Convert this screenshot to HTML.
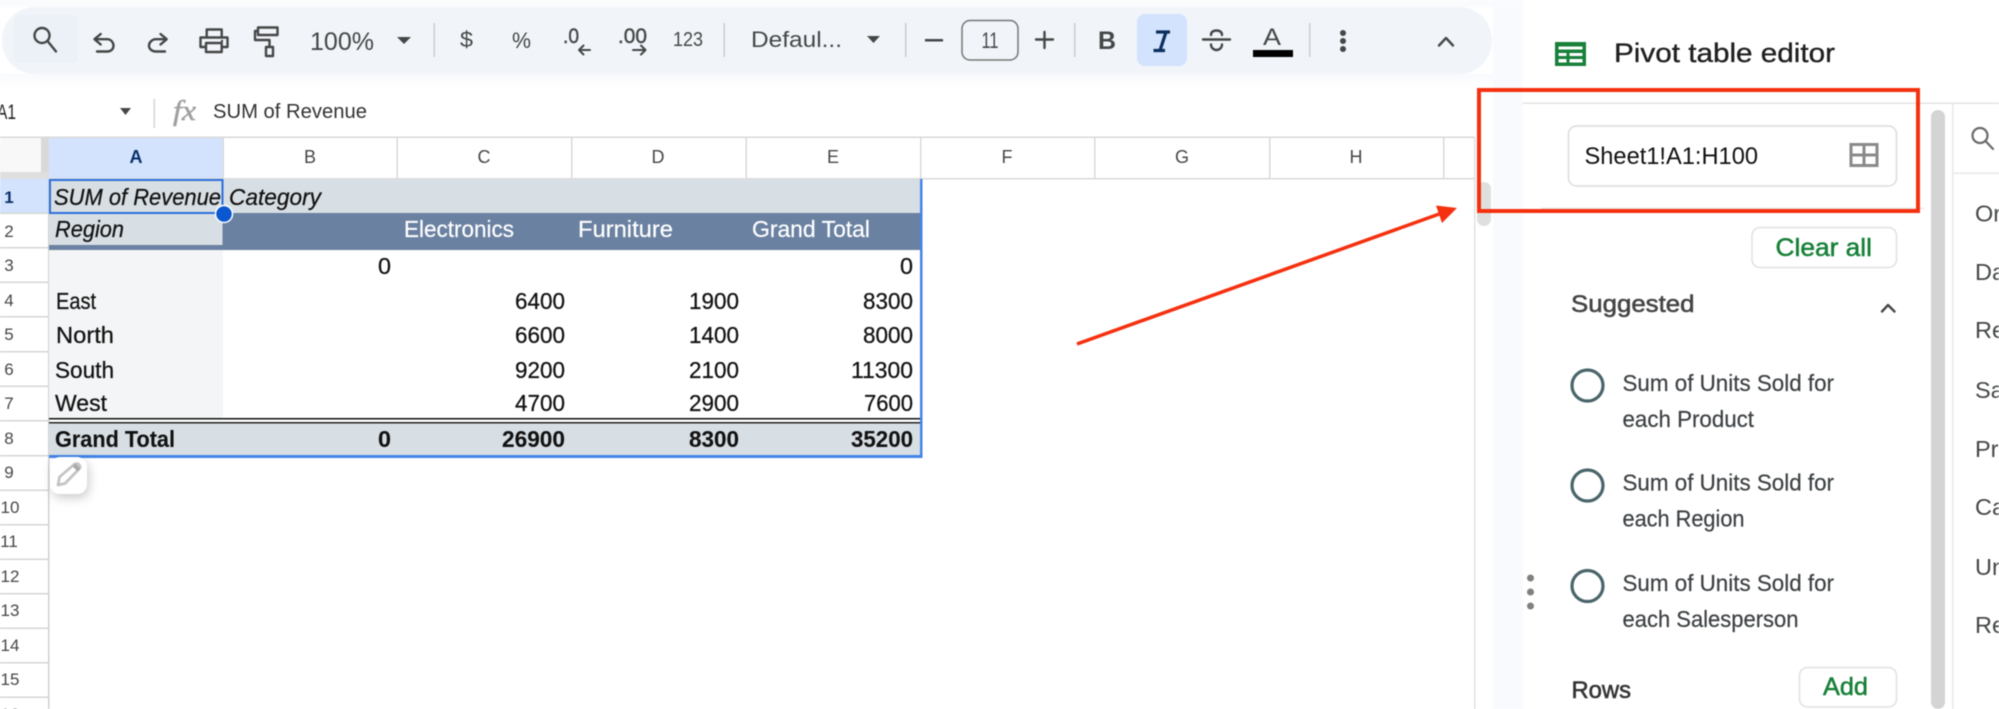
<!DOCTYPE html>
<html lang="en">
<head>
<meta charset="utf-8">
<title>Pivot table editor</title>
<style>
html,body{margin:0;padding:0;width:1999px;height:709px;overflow:hidden;background:#fff}
svg{display:block;filter:blur(.45px)}
text{font-family:"Liberation Sans",sans-serif}
.cell{font-size:23px;fill:#111;stroke:#111;stroke-width:.25}
.cell.w{fill:#fff;stroke:#fff;stroke-width:.2}
.cell.b{font-weight:bold;stroke-width:.1}
.hd{font-size:18px;fill:#474747;text-anchor:middle}
.rn{font-size:17px;fill:#474747;text-anchor:middle}
.tb{fill:#444746}
.ic{fill:none;stroke:#444746;stroke-width:2.4;stroke-linecap:round;stroke-linejoin:round}
.pn{font-size:23px;fill:#3c4043;stroke:#3c4043;stroke-width:.2}
.lb{font-size:23.5px;fill:#444746}
.med{font-size:24px;stroke-width:.55}
.grn{font-size:25px;fill:#188038;stroke:#188038;stroke-width:.5}
</style>
</head>
<body>
<svg width="1999" height="709" viewBox="0 0 1999 709" xmlns="http://www.w3.org/2000/svg">
<defs>
<linearGradient id="fade" x1="0" y1="0" x2="0" y2="1"><stop offset="0" stop-color="#f8fafd"/><stop offset="1" stop-color="#fff"/></linearGradient>
<filter id="sh" x="-50%" y="-50%" width="200%" height="200%"><feDropShadow dx="2" dy="4" stdDeviation="5" flood-color="#000" flood-opacity=".2"/></filter>
</defs>
<rect width="1999" height="709" fill="#fff"/>
<rect x="0" y="0" width="1520" height="7" fill="#f9fbfd"/>
<rect x="0" y="74" width="1500" height="14" fill="url(#fade)"/>

<!-- toolbar -->
<rect x="2" y="7" width="1490" height="67" rx="33" fill="#f1f4f9"/>
<rect x="14" y="15" width="64" height="48" rx="6" fill="#ecf1f8"/>
<circle cx="42" cy="35.500" r="7.500" class="ic"/><path d="M47.500 41L56 51.500" class="ic"/>
<path d="M100.700 34L94.500 39.200L100.700 44.500M95 39.200H107C111 39.200 113.500 42.500 113.500 45.700C113.500 49 111 51.500 107 51.500H97" class="ic"/>
<path d="M160.500 34L166.700 39.200L160.500 44.500M166 39.200H156C152 39.200 149 42.500 149 45.700C149 49 152 51.500 156 51.500H165" class="ic"/>
<path d="M206.700 37V29.500H221.700V37M205.500 47H200.500V37.500H227.500V47H222.500M206 43H221.700V52H206Z" class="ic"/><circle cx="222" cy="41" r="1.200" fill="#444746"/>
<path d="M258 27.500H277.500V35H258ZM258 31H255V40H269.500V47M266 47H273V56H266Z" class="ic"/>
<text x="310" y="50" class="tb" font-size="25" textLength="64" lengthAdjust="spacingAndGlyphs">100%</text>
<path d="M397 37H411L404 44Z" fill="#444746"/>
<rect x="433.500" y="23" width="1.500" height="34" fill="#c9ccd0"/>
<text x="460" y="47" class="tb" font-size="22" textLength="13" lengthAdjust="spacingAndGlyphs">$</text>
<text x="512" y="48" class="tb" font-size="22" textLength="19" lengthAdjust="spacingAndGlyphs">%</text>
<text x="563" y="43" class="tb" font-size="21" textLength="16" lengthAdjust="spacingAndGlyphs" stroke="#444746" stroke-width=".4">.0</text>
<path d="M590 50H579M583.500 45.500L579 50L583.500 54.500" class="ic" style="stroke-width:2"/>
<text x="618" y="43" class="tb" font-size="21" textLength="29" lengthAdjust="spacingAndGlyphs" stroke="#444746" stroke-width=".4">.00</text>
<path d="M633 50H645.500M641 45.500L645.500 50L641 54.500" class="ic" style="stroke-width:2"/>
<text x="673" y="46" class="tb" font-size="20" textLength="30" lengthAdjust="spacingAndGlyphs">123</text>
<rect x="723.500" y="23" width="1.500" height="34" fill="#c9ccd0"/>
<text x="751" y="47" class="tb" font-size="22" textLength="91" lengthAdjust="spacingAndGlyphs">Defaul...</text>
<path d="M867 36H880L873.500 43Z" fill="#444746"/>
<rect x="905" y="23" width="1.500" height="34" fill="#c9ccd0"/>
<rect x="925" y="39" width="18" height="2.500" fill="#444746"/>
<rect x="962" y="20.500" width="56" height="39.500" rx="8" fill="none" stroke="#747775" stroke-width="1.500"/>
<text x="981.500" y="48" class="tb" font-size="22" textLength="17" lengthAdjust="spacingAndGlyphs">11</text>
<path d="M1036 39.500H1053M1044.500 32V48" class="ic"/>
<rect x="1074" y="23" width="1.500" height="34" fill="#c9ccd0"/>
<text x="1098" y="49" class="tb" font-size="25" font-weight="bold" textLength="18" lengthAdjust="spacingAndGlyphs">B</text>
<rect x="1137" y="14" width="50" height="52" rx="8" fill="#d3e3fd"/>
<path d="M1156 32H1170M1159 50.500H1153.500M1166 32L1160 50.500M1153.500 50.500H1165" fill="none" stroke="#0b2f5e" stroke-width="3.200"/>
<path d="M1203 39.500H1230" class="ic"/>
<path d="M1211 35C1211 31.500 1214 30.500 1216.500 30.500C1219 30.500 1222 31.500 1222 35M1211 44.500C1211 48 1214 50 1216.500 50C1219 50 1222 48 1222 44.500" class="ic"/>
<text x="1263" y="45" class="tb" font-size="24" textLength="18" lengthAdjust="spacingAndGlyphs">A</text>
<rect x="1253" y="50" width="40" height="7" fill="#000"/>
<rect x="1309" y="23" width="1.500" height="34" fill="#c9ccd0"/>
<circle cx="1343" cy="33" r="3" fill="#444746"/><circle cx="1343" cy="41" r="3" fill="#444746"/><circle cx="1343" cy="49" r="3" fill="#444746"/>
<path d="M1439 45.500L1446 38L1453 45.500" class="ic"/>

<!-- formula bar -->
<text x="-3" y="119" font-size="21" fill="#222" textLength="19" lengthAdjust="spacingAndGlyphs">A1</text>
<path d="M120 108H131L125.500 115Z" fill="#444746"/>
<rect x="153.500" y="99" width="1.500" height="29" fill="#d5d5d5"/>
<text x="173" y="120" font-size="28" font-style="italic" fill="#a0a0a0" stroke="#a0a0a0" stroke-width=".5" style="font-family:'Liberation Serif',serif" textLength="23" lengthAdjust="spacingAndGlyphs">fx</text>
<text x="213" y="118" font-size="20.500" fill="#333" textLength="154" lengthAdjust="spacingAndGlyphs">SUM of Revenue</text>

<!-- column header -->
<rect x="0" y="136.500" width="1475" height="1.500" fill="#d9d9d9"/>
<rect x="0" y="138" width="41" height="34" fill="#f8f8f8"/>
<rect x="41" y="138" width="8" height="34" fill="#d9d9d9"/>
<rect x="41" y="172" width="8" height="7" fill="#d9d9d9"/>
<rect x="0" y="172" width="49" height="7" fill="#dfdfdf"/>
<rect x="49" y="138" width="174" height="41" fill="#d3e3fd"/>
<rect x="49" y="178" width="1426" height="1.500" fill="#d9d9d9"/>
<g fill="#dadada"><rect x="222.500" y="138" width="1.500" height="41"/><rect x="396.500" y="138" width="1.500" height="41"/><rect x="571" y="138" width="1.500" height="41"/><rect x="745.500" y="138" width="1.500" height="41"/><rect x="920" y="138" width="1.500" height="41"/><rect x="1094" y="138" width="1.500" height="41"/><rect x="1269" y="138" width="1.500" height="41"/><rect x="1443" y="138" width="1.500" height="41"/></g>
<text x="136" y="163" font-size="18" font-weight="bold" fill="#0b2f6a" text-anchor="middle">A</text>
<text x="310" y="163" class="hd">B</text><text x="484" y="163" class="hd">C</text><text x="658" y="163" class="hd">D</text><text x="833" y="163" class="hd">E</text><text x="1007" y="163" class="hd">F</text><text x="1182" y="163" class="hd">G</text><text x="1356" y="163" class="hd">H</text>

<!-- row header -->
<rect x="0" y="179" width="48" height="34" fill="#d3e3fd"/>
<rect x="48" y="179" width="1.500" height="530" fill="#d0d0d0"/>
<g fill="#d6d6d6"><rect x="0" y="212.500" width="48" height="1.500"/><rect x="0" y="247" width="48" height="1.500"/><rect x="0" y="281.500" width="48" height="1.500"/><rect x="0" y="316" width="48" height="1.500"/><rect x="0" y="351" width="48" height="1.500"/><rect x="0" y="385.500" width="48" height="1.500"/><rect x="0" y="420" width="48" height="1.500"/><rect x="0" y="455" width="48" height="1.500"/><rect x="0" y="489.500" width="48" height="1.500"/><rect x="0" y="524" width="48" height="1.500"/><rect x="0" y="558.500" width="48" height="1.500"/><rect x="0" y="593" width="48" height="1.500"/><rect x="0" y="627.500" width="48" height="1.500"/><rect x="0" y="662" width="48" height="1.500"/><rect x="0" y="696.500" width="48" height="1.500"/></g>
<text x="9" y="203" font-size="17" font-weight="bold" fill="#0b2f6a" text-anchor="middle">1</text>
<text x="9" y="237" class="rn">2</text><text x="9" y="271" class="rn">3</text><text x="9" y="306" class="rn">4</text><text x="9" y="340" class="rn">5</text><text x="9" y="375" class="rn">6</text><text x="9" y="409" class="rn">7</text><text x="9" y="444" class="rn">8</text><text x="9" y="478" class="rn">9</text>
<text x="10" y="513" class="rn">10</text><text x="9" y="547" class="rn">11</text><text x="10" y="582" class="rn">12</text><text x="10" y="616" class="rn">13</text><text x="10" y="651" class="rn">14</text><text x="10" y="685" class="rn">15</text><text x="10" y="720" class="rn">16</text>

<!-- pivot table -->
<rect x="49" y="179" width="871" height="34" fill="#d8dfe4"/>
<rect x="49" y="213" width="174" height="37" fill="#d8dfe4"/>
<rect x="49" y="245" width="174" height="5" fill="#6a81a1"/>
<rect x="222.500" y="213" width="697.500" height="37" fill="#6a81a1"/>
<rect x="49" y="250" width="174" height="168" fill="#f3f5f6"/>
<rect x="49" y="423" width="871" height="33" fill="#d8dfe4"/>
<rect x="49" y="418" width="871" height="1.500" fill="#111"/>
<rect x="49" y="422" width="871" height="1.500" fill="#222"/>
<rect x="49" y="455" width="873" height="3" fill="#4285e8"/>
<rect x="920" y="179" width="2.500" height="279" fill="#4285e8"/>
<rect x="50" y="180" width="172.500" height="33" fill="none" stroke="#2b6fdc" stroke-width="2"/>

<text x="54" y="205" class="cell" font-style="italic" textLength="167" lengthAdjust="spacingAndGlyphs">SUM of Revenue</text>
<text x="229" y="205" class="cell" font-style="italic" textLength="92" lengthAdjust="spacingAndGlyphs">Category</text>
<text x="55" y="237" class="cell" font-style="italic" textLength="69" lengthAdjust="spacingAndGlyphs">Region</text>
<text x="404" y="237" class="cell w" textLength="110" lengthAdjust="spacingAndGlyphs">Electronics</text>
<text x="578" y="237" class="cell w" textLength="95" lengthAdjust="spacingAndGlyphs">Furniture</text>
<text x="752" y="237" class="cell w" textLength="118" lengthAdjust="spacingAndGlyphs">Grand Total</text>

<text x="378" y="274" class="cell" textLength="13" lengthAdjust="spacingAndGlyphs">0</text>
<text x="900" y="274" class="cell" textLength="13" lengthAdjust="spacingAndGlyphs">0</text>

<text x="56" y="309" class="cell" textLength="40" lengthAdjust="spacingAndGlyphs">East</text>
<text x="515" y="309" class="cell" textLength="50" lengthAdjust="spacingAndGlyphs">6400</text>
<text x="689" y="309" class="cell" textLength="50" lengthAdjust="spacingAndGlyphs">1900</text>
<text x="863" y="309" class="cell" textLength="50" lengthAdjust="spacingAndGlyphs">8300</text>

<text x="56" y="343" class="cell" textLength="58" lengthAdjust="spacingAndGlyphs">North</text>
<text x="515" y="343" class="cell" textLength="50" lengthAdjust="spacingAndGlyphs">6600</text>
<text x="689" y="343" class="cell" textLength="50" lengthAdjust="spacingAndGlyphs">1400</text>
<text x="863" y="343" class="cell" textLength="50" lengthAdjust="spacingAndGlyphs">8000</text>

<text x="55" y="378" class="cell" textLength="59" lengthAdjust="spacingAndGlyphs">South</text>
<text x="515" y="378" class="cell" textLength="50" lengthAdjust="spacingAndGlyphs">9200</text>
<text x="689" y="378" class="cell" textLength="50" lengthAdjust="spacingAndGlyphs">2100</text>
<text x="851" y="378" class="cell" textLength="62" lengthAdjust="spacingAndGlyphs">11300</text>

<text x="55" y="411" class="cell" textLength="52" lengthAdjust="spacingAndGlyphs">West</text>
<text x="515" y="411" class="cell" textLength="50" lengthAdjust="spacingAndGlyphs">4700</text>
<text x="689" y="411" class="cell" textLength="50" lengthAdjust="spacingAndGlyphs">2900</text>
<text x="864" y="411" class="cell" textLength="49" lengthAdjust="spacingAndGlyphs">7600</text>

<text x="55" y="447" class="cell b" textLength="120" lengthAdjust="spacingAndGlyphs">Grand Total</text>
<text x="378" y="447" class="cell b" textLength="13" lengthAdjust="spacingAndGlyphs">0</text>
<text x="502" y="447" class="cell b" textLength="63" lengthAdjust="spacingAndGlyphs">26900</text>
<text x="689" y="447" class="cell b" textLength="50" lengthAdjust="spacingAndGlyphs">8300</text>
<text x="851" y="447" class="cell b" textLength="62" lengthAdjust="spacingAndGlyphs">35200</text>

<circle cx="224" cy="214" r="8.500" fill="#0b57d0" stroke="#fff" stroke-width="1.500"/>

<!-- pencil button -->
<rect x="50" y="457" width="37" height="37" rx="10" fill="#fff" filter="url(#sh)"/>
<path d="M58 485L59.500 477L74 464.500C76 463 78.500 463.500 79.500 465.500C80.500 467 80 468 79 469L65 483.500Z" fill="none" stroke="#c4c4c4" stroke-width="2.800" stroke-linejoin="round"/>
<path d="M74 465L79 470" stroke="#a8a8a8" stroke-width="4" fill="none"/>

<!-- side panel -->
<rect x="1493" y="0" width="30" height="709" fill="#f8fafd"/>
<rect x="1474" y="137" width="1.500" height="572" fill="#e0e0e0"/>
<rect x="1477" y="182" width="14" height="44" rx="7" fill="#dfdfdf"/>
<rect x="1523" y="102.500" width="476" height="1.500" fill="#e3e3e3"/>
<rect x="1541" y="207.500" width="383" height="1.500" fill="#e8e8e8"/>
<rect x="1931" y="110" width="14" height="599" rx="7" fill="#d4d4d4"/>
<rect x="1952" y="103" width="1.500" height="606" fill="#e8e8e8"/>
<rect x="1953" y="172.500" width="46" height="1.500" fill="#e8e8e8"/>

<!-- sheets icon -->
<rect x="1555" y="42" width="31" height="24" fill="#188038"/>
<g fill="#fff"><rect x="1558.500" y="46.500" width="24" height="3"/><rect x="1558.500" y="53" width="8" height="3"/><rect x="1569.500" y="53" width="13" height="3"/><rect x="1558.500" y="59" width="8" height="3.500"/><rect x="1569.500" y="59" width="13" height="3.500"/></g>
<text x="1614" y="62" font-size="27" fill="#1f1f1f" stroke="#1f1f1f" stroke-width=".35" textLength="221" lengthAdjust="spacingAndGlyphs">Pivot table editor</text>

<!-- range input -->
<rect x="1568.500" y="126" width="328" height="60" rx="8" fill="#fff" stroke="#dcdcdc" stroke-width="1.500"/>
<text x="1584.500" y="164" font-size="24" fill="#111" textLength="173.500" lengthAdjust="spacingAndGlyphs">Sheet1!A1:H100</text>
<path d="M1851 144.500H1877V165.500H1851ZM1864 144.500V165.500M1851 155H1877" fill="none" stroke="#8a8a8a" stroke-width="3"/>

<!-- clear all -->
<rect x="1752" y="227.500" width="144.500" height="40" rx="8" fill="#fff" stroke="#e0e0e0" stroke-width="1.500"/>
<text x="1775.500" y="256" class="grn" textLength="96.500" lengthAdjust="spacingAndGlyphs">Clear all</text>

<text x="1571" y="312" class="lb med" style="fill:#444;stroke:#444" textLength="123.500" lengthAdjust="spacingAndGlyphs">Suggested</text>
<path d="M1882 311.500L1888 305L1894.500 311.500" class="ic"/>

<circle cx="1587.500" cy="385.500" r="15.500" fill="none" stroke="#4a656a" stroke-width="3.200"/>
<text x="1622.500" y="391" class="pn" textLength="211.500" lengthAdjust="spacingAndGlyphs">Sum of Units Sold for</text>
<text x="1622.500" y="427" class="pn" textLength="131.500" lengthAdjust="spacingAndGlyphs">each Product</text>
<circle cx="1587.500" cy="485.500" r="15.500" fill="none" stroke="#4a656a" stroke-width="3.200"/>
<text x="1622.500" y="490.500" class="pn" textLength="211.500" lengthAdjust="spacingAndGlyphs">Sum of Units Sold for</text>
<text x="1622.500" y="526.500" class="pn" textLength="122" lengthAdjust="spacingAndGlyphs">each Region</text>
<circle cx="1587.500" cy="586" r="15.500" fill="none" stroke="#4a656a" stroke-width="3.200"/>
<text x="1622.500" y="591" class="pn" textLength="211.500" lengthAdjust="spacingAndGlyphs">Sum of Units Sold for</text>
<text x="1622.500" y="627" class="pn" textLength="176" lengthAdjust="spacingAndGlyphs">each Salesperson</text>

<circle cx="1530.500" cy="578" r="3.500" fill="#808080"/><circle cx="1530.500" cy="592" r="3.500" fill="#808080"/><circle cx="1530.500" cy="606" r="3.500" fill="#808080"/>

<text x="1571.500" y="698" class="lb med" style="fill:#333;stroke:#333" textLength="59.500" lengthAdjust="spacingAndGlyphs">Rows</text>
<rect x="1799.500" y="667.500" width="97" height="39.500" rx="8" fill="#fff" stroke="#e0e0e0" stroke-width="1.500"/>
<text x="1823" y="695" class="grn" textLength="45" lengthAdjust="spacingAndGlyphs">Add</text>

<!-- right field list -->
<circle cx="1980" cy="135.500" r="7.500" fill="none" stroke="#6a6a6a" stroke-width="2.200"/><path d="M1985.500 141L1993 149" stroke="#6a6a6a" stroke-width="2.200" fill="none" stroke-linecap="round"/>
<text x="1975" y="221.500" class="lb">Order</text>
<text x="1975" y="280" class="lb">Date</text>
<text x="1975" y="338" class="lb">Region</text>
<text x="1975" y="398" class="lb">Sales</text>
<text x="1975" y="457" class="lb">Product</text>
<text x="1975" y="515" class="lb">Category</text>
<text x="1975" y="575" class="lb">Units</text>
<text x="1975" y="633" class="lb">Revenue</text>

<!-- annotations -->
<rect x="1479" y="90" width="439" height="121" fill="none" stroke="#f5300f" stroke-width="4"/>
<path d="M1077 344L1442 213" stroke="#f5300f" stroke-width="3.500" fill="none"/>
<path d="M1457 208L1436 205.500L1442 223Z" fill="#f5300f"/>
</svg>
</body>
</html>
